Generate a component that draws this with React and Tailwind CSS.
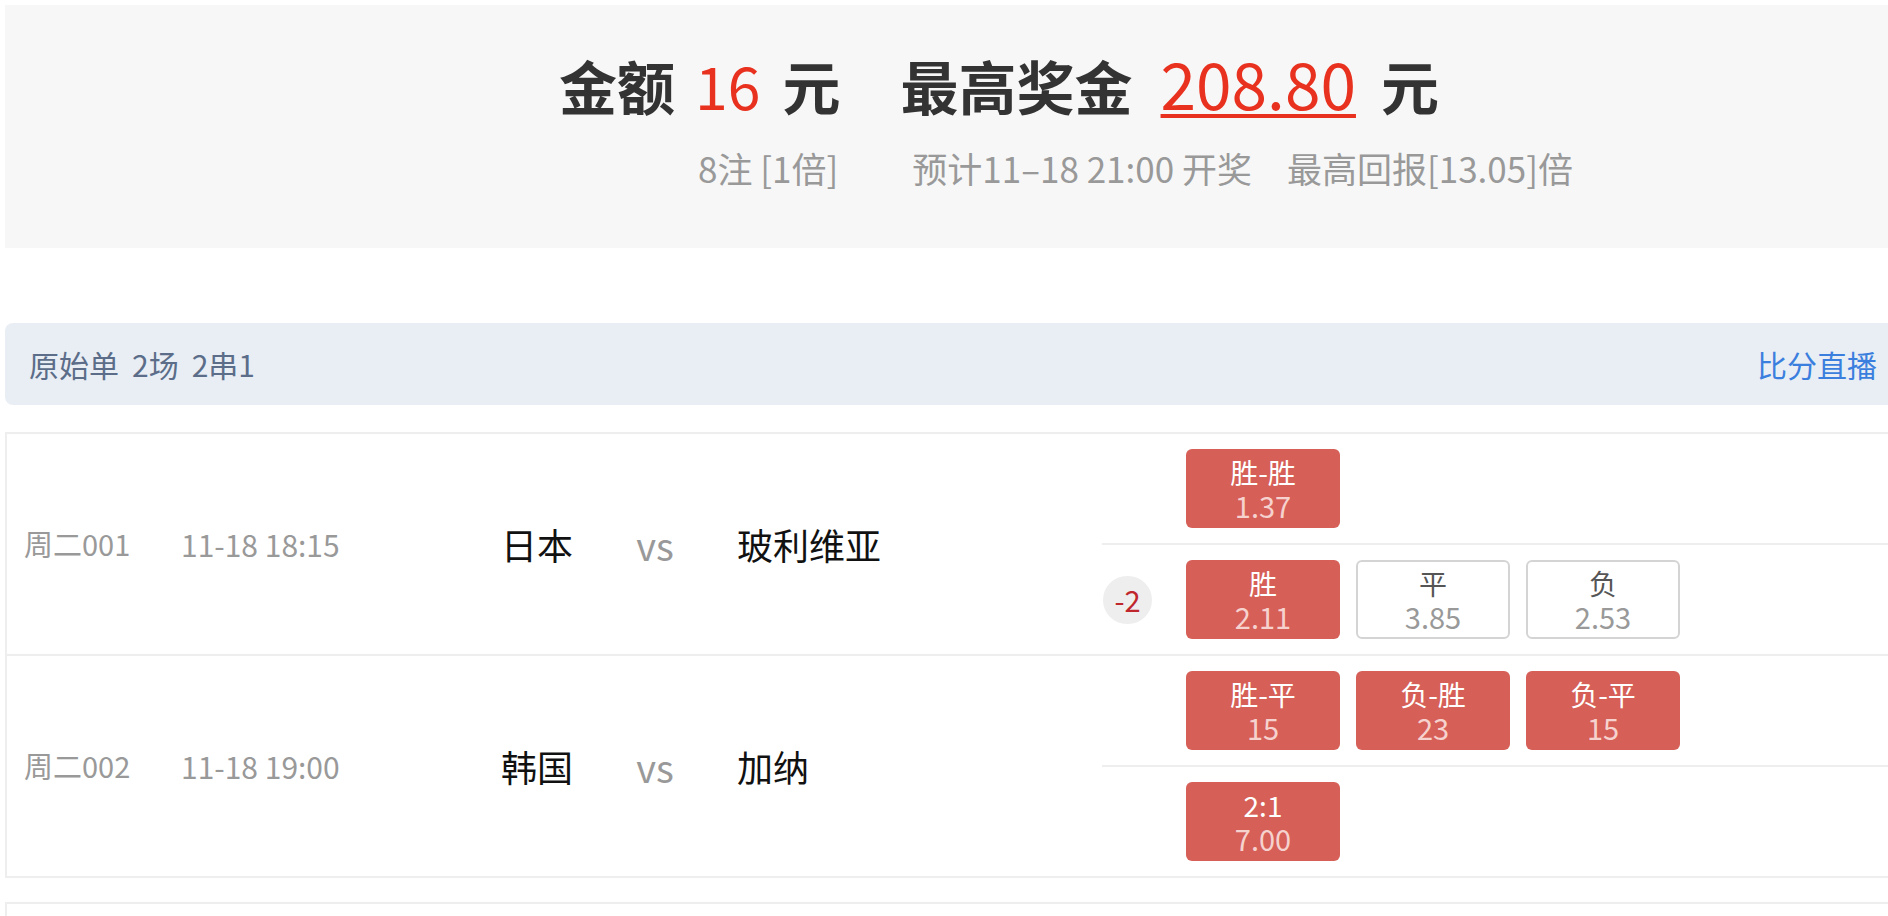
import React from "react";

const F = "font-['Noto_Sans_CJK_SC','Noto_Sans',sans-serif]";

function Btn({ label, odds, on }) {
  if (on) {
    return (
      <div className="w-[154px] h-[79px] rounded-[6px] bg-[#d65f58] flex flex-col items-center justify-center">
        <div className="text-[28px] leading-[33px] text-white">{label}</div>
        <div className="text-[29px] leading-[33px] text-[#f6d2ce]">{odds}</div>
      </div>
    );
  }
  return (
    <div className="w-[154px] h-[79px] rounded-[6px] bg-white border-2 border-[#d4d4d4] flex flex-col items-center justify-center">
      <div className="text-[28px] leading-[33px] text-[#555]">{label}</div>
      <div className="text-[29px] leading-[33px] text-[#999]">{odds}</div>
    </div>
  );
}

function SubRow({ handicap, items, last }) {
  return (
    <div className={"flex items-center " + (last ? "flex-1" : "h-[111px] border-b-2 border-[#eeeeee]")}>
      <div className="w-[84px] flex items-center">
        {handicap ? (
          <div className="ml-[1px] w-[49px] h-[48px] rounded-full bg-[#eeeeee] flex items-center justify-center text-[29px] text-[#c0272d]">
            {handicap}
          </div>
        ) : null}
      </div>
      <div className="flex gap-[16px]">
        {items.map((it, i) => (
          <Btn key={i} {...it} />
        ))}
      </div>
    </div>
  );
}

function MatchRow({ no, time, home, away, subs, bordered }) {
  return (
    <div className={"flex " + (bordered ? "h-[222px] border-b-2 border-[#eeeeee]" : "h-[220px]")}>
      <div className="w-[1095px] pl-[17px] flex items-center">
        <div className="w-[157px] text-[29px] text-[#999]">{no}</div>
        <div className="w-[160px] text-[30px] text-[#999] whitespace-nowrap">{time}</div>
        <div className="w-[232px] text-right text-[36px] text-[#111]">{home}</div>
        <div className="w-[164px] text-center text-[38px] text-[#999]">vs</div>
        <div className="flex-1 text-[36px] text-[#111]">{away}</div>
      </div>
      <div className="flex-1 flex flex-col">
        {subs.map((s, i) => (
          <SubRow key={i} {...s} last={i === subs.length - 1} />
        ))}
      </div>
    </div>
  );
}

export default function App() {
  return (
    <div className={"w-[1888px] h-[916px] overflow-hidden bg-white " + F}>
      <div className="ml-[5px] mt-[5px] w-[1950px] h-[243px] bg-[#f7f7f7] pt-[39px]">
        <div className="pl-[554px] flex items-baseline h-[76px] leading-[76px] text-[#333]">
          <span className="text-[58px] font-bold">金额</span>
          <span className="ml-[20px] text-[59px] text-[#e8321f]">16</span>
          <span className="ml-[22px] text-[58px] font-bold">元</span>
          <span className="ml-[60px] text-[58px] font-bold">最高奖金</span>
          <span className="ml-[28px] text-[64px] text-[#e8321f] underline decoration-4 underline-offset-[4px]">208.80</span>
          <span className="ml-[25px] text-[58px] font-bold">元</span>
        </div>
        <div className="mt-[26px] pl-[693px] flex items-center h-[44px] text-[35px] text-[#999] whitespace-nowrap">
          <span>8注 [1倍]</span>
          <span className="ml-[74px]">预计11–18 21:00 开奖</span>
          <span className="ml-[35px]">最高回报[13.05]倍</span>
        </div>
      </div>

      <div className="ml-[5px] mt-[75px] w-[1900px] h-[82px] bg-[#e9eef5] rounded-[8px] flex items-center justify-between pl-[24px] pr-[28px]">
        <div className="flex gap-[13px] text-[30px] text-[#5b6d88]">
          <span>原始单</span>
          <span>2场</span>
          <span>2串1</span>
        </div>
        <div className="text-[30px] text-[#3b7fde]">比分直播</div>
      </div>

      <div className="ml-[5px] mt-[27px] w-[1950px] border-2 border-[#eeeeee]">
        <MatchRow
          bordered
          no="周二001"
          time="11-18 18:15"
          home="日本"
          away="玻利维亚"
          subs={[
            { items: [{ label: "胜-胜", odds: "1.37", on: true }] },
            {
              handicap: "-2",
              items: [
                { label: "胜", odds: "2.11", on: true },
                { label: "平", odds: "3.85" },
                { label: "负", odds: "2.53" },
              ],
            },
          ]}
        />
        <MatchRow
          no="周二002"
          time="11-18 19:00"
          home="韩国"
          away="加纳"
          subs={[
            {
              items: [
                { label: "胜-平", odds: "15", on: true },
                { label: "负-胜", odds: "23", on: true },
                { label: "负-平", odds: "15", on: true },
              ],
            },
            { items: [{ label: "2:1", odds: "7.00", on: true }] },
          ]}
        />
      </div>

      <div className="ml-[5px] mt-[24px] w-[1950px] h-[100px] border-2 border-[#eeeeee]"></div>
    </div>
  );
}
